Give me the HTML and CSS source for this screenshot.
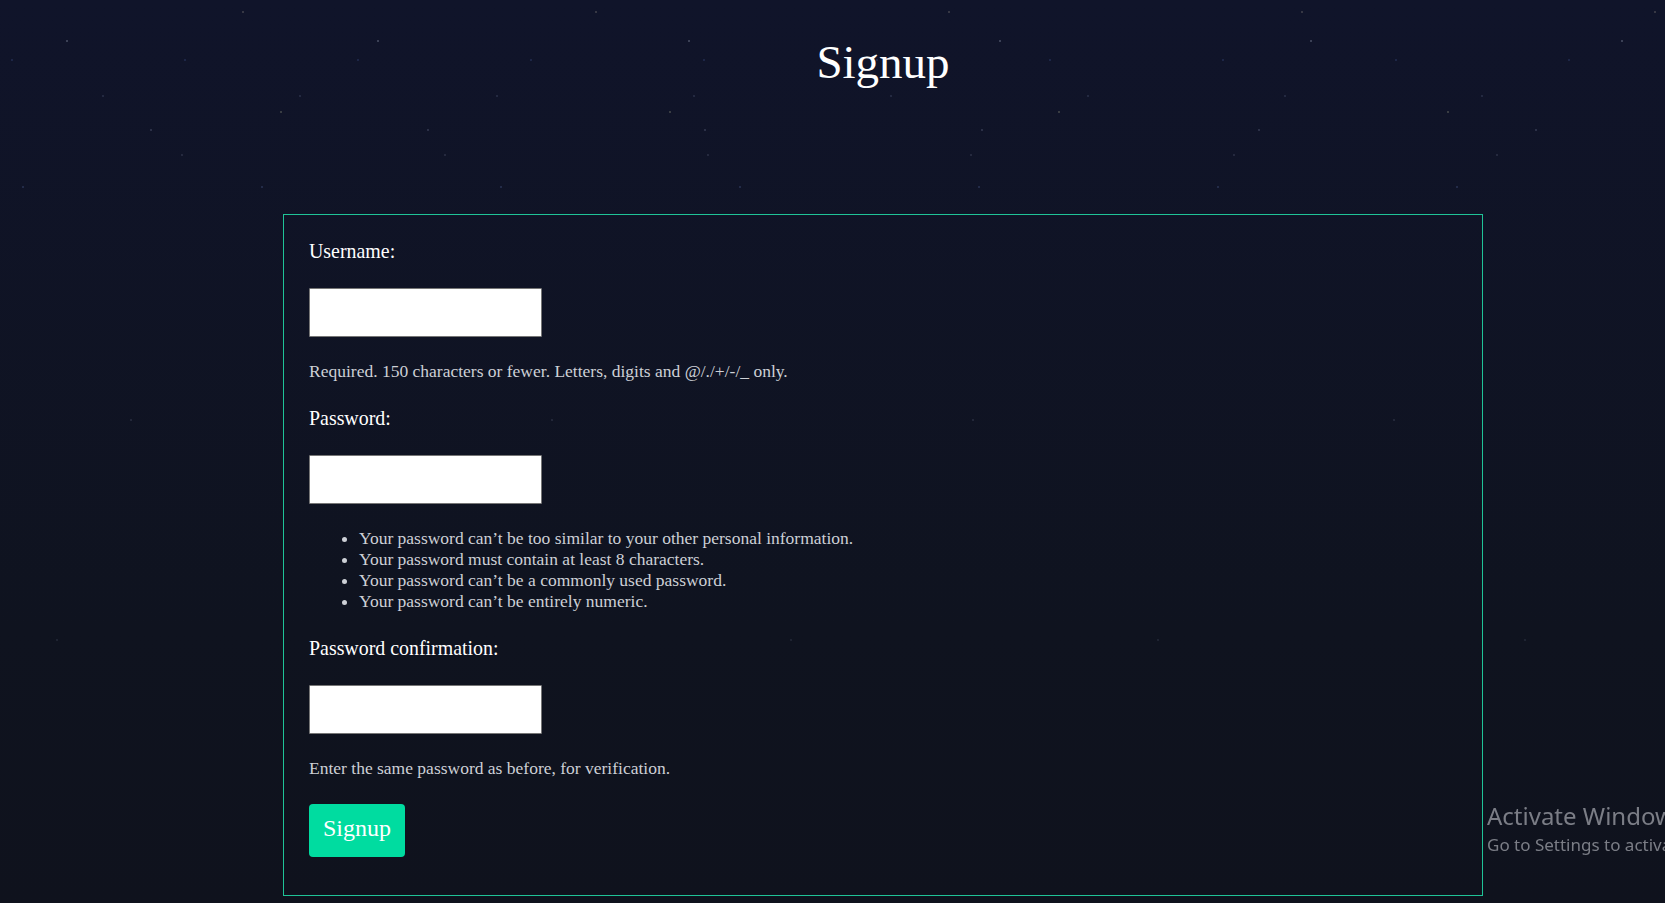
FILE: index.html
```html
<!DOCTYPE html>
<html lang="en">
<head>
<meta charset="utf-8">
<title>Signup</title>
<link rel="stylesheet" href="styles.css">
</head>
<body>
<div class="page">
  <h1 class="title">Signup</h1>
  <div class="card">
    <form class="form">
      <label class="label" for="id_username">Username:</label>
      <input class="field" id="id_username" type="text">
      <span class="help">Required. 150 characters or fewer. Letters, digits and @/./+/-/_ only.</span>
      <label class="label" for="id_password1">Password:</label>
      <input class="field" id="id_password1" type="password">
      <ul class="help-list">
        <li>Your password can’t be too similar to your other personal information.</li>
        <li>Your password must contain at least 8 characters.</li>
        <li>Your password can’t be a commonly used password.</li>
        <li>Your password can’t be entirely numeric.</li>
      </ul>
      <label class="label" for="id_password2">Password confirmation:</label>
      <input class="field" id="id_password2" type="password">
      <span class="help">Enter the same password as before, for verification.</span>
      <button class="btn" type="button">Signup</button>
    </form>
  </div>
</div>
<div class="watermark">
  <div class="wm-title">Activate Windows</div>
  <div class="wm-sub">Go to Settings to activate Windows.</div>
</div>
</body>
</html>
```
FILE: styles.css
```css
html, body {
  margin: 0;
  height: 100%;
  overflow: hidden;
}
body {
  font-family: "Liberation Serif", "Times New Roman", serif;
  color: #ffffff;
  background-color: #0f1322;
  background-image:
    radial-gradient(circle at 67px 41px, rgba(190,200,220,0.5) 0, rgba(190,200,220,0) 1.4px),
    radial-gradient(circle at 151px 130px, rgba(170,180,210,0.4) 0, rgba(170,180,210,0) 1.3px),
    radial-gradient(circle at 23px 187px, rgba(120,150,220,0.4) 0, rgba(120,150,220,0) 1.3px),
    radial-gradient(circle at 243px 12px, rgba(200,190,170,0.45) 0, rgba(200,190,170,0) 1.3px),
    radial-gradient(circle at 103px 96px, rgba(150,170,210,0.35) 0, rgba(150,170,210,0) 1.2px),
    radial-gradient(circle at 182px 155px, rgba(160,170,200,0.35) 0, rgba(160,170,200,0) 1.2px),
    radial-gradient(circle at 12px 60px, rgba(90,120,200,0.45) 0, rgba(90,120,200,0) 1.2px),
    radial-gradient(circle at 281px 112px, rgba(200,200,160,0.45) 0, rgba(200,200,160,0) 1.4px),
    radial-gradient(circle at 131px 420px, rgba(170,180,210,0.3) 0, rgba(170,180,210,0) 1.2px),
    radial-gradient(circle at 57px 640px, rgba(170,180,210,0.25) 0, rgba(170,180,210,0) 1.2px),
    linear-gradient(#10142a, #0f131f 70%, #0f121d);
  background-size:
    311px 220px, 277px 220px, 239px 220px, 353px 220px,
    197px 220px, 263px 220px, 173px 220px, 389px 220px,
    421px 800px, 367px 800px,
    100% 100%;
  background-repeat: repeat-x, repeat-x, repeat-x, repeat-x, repeat-x, repeat-x, repeat-x, repeat-x, repeat-x, repeat-x, no-repeat;
}
.page {
  display: flex;
  flex-direction: column;
  align-items: center;
  padding-left: 101px;
}
.title {
  margin: 35px 0 0;
  font-size: 47px;
  line-height: 54px;
  font-weight: normal;
  color: #ffffff;
}
.card {
  box-sizing: border-box;
  width: 1200px;
  margin-top: 125px;
  border: 1px solid #1fc397;
  padding: 24px 24px 38px 25px;
}
.form {
  display: flex;
  flex-direction: column;
  align-items: flex-start;
  gap: 24px;
}
.label {
  font-size: 19.9px;
  line-height: 24px;
  color: #ffffff;
  margin-bottom: 1px;
}
.field {
  box-sizing: border-box;
  width: 233px;
  height: 49px;
  margin: 0;
  background: #ffffff;
  border: 1px solid #767676;
  border-radius: 1px;
  padding: 0 8px;
  font-family: "Liberation Serif", serif;
  font-size: 17px;
}
.help {
  font-size: 17.5px;
  line-height: 21px;
  color: #cdd0d6;
}
.help-list {
  margin: 0;
  padding-left: 50px;
  font-size: 17.5px;
  line-height: 21px;
  color: #cdd0d6;
}
.btn {
  margin-top: 1px;
  box-sizing: border-box;
  height: 53px;
  padding: 11px 14px 15px;
  border: none;
  border-radius: 4px;
  background: #00dca0;
  color: #ffffff;
  font-family: "Liberation Serif", "Times New Roman", serif;
  font-size: 24px;
  line-height: 27px;
  cursor: pointer;
}
.watermark {
  position: fixed;
  left: 1487px;
  top: 801px;
  white-space: nowrap;
  color: rgba(150,153,160,0.8);
  font-family: "Noto Sans", "Open Sans", sans-serif;
}
.wm-title {
  font-size: 24px;
  line-height: 30px;
}
.wm-sub {
  font-size: 17px;
  line-height: 27px;
}
```
